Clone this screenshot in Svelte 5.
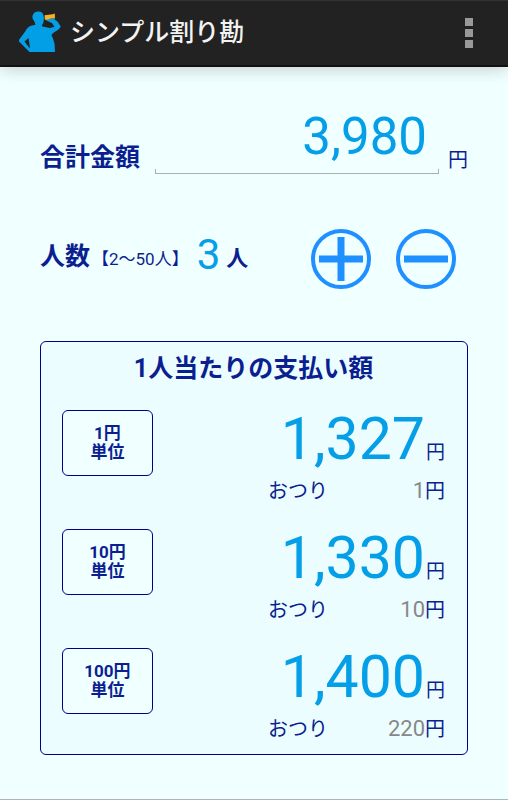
<script>
  let total = $state('3,980');
  let people = $state(3);

  const units = [1, 10, 100];
  const amount = $derived(Number(total.replace(/[^0-9]/g, '')) || 0);
  const rows = $derived(
    units.map((unit) => {
      const each = Math.ceil(amount / people / unit) * unit;
      return { unit, each, change: each * people - amount };
    })
  );

  function formatTotal() {
    total = amount.toLocaleString('en-US');
  }
</script>

<div class="screen">
  <header>
    <svg class="logo" viewBox="0 0 44 44" aria-hidden="true">
      <path
        fill="#029ee6"
        d="M19 0.5C22 0.3 24.3 2 24.5 4.5L25 7.5L24.5 11Q24.3 13 22.8 14L23.3 15.4L31 17L35.5 15.7L33.2 12.3L27.5 9.5Q25.4 8.6 25.8 7L29 8L34.5 7.2Q36.5 9.5 38.5 10.5L41.6 15.2Q41.6 16.6 39.5 18.5L34.2 22L32.4 24Q34.5 28 35.6 33L36 41H10.5L0 30.5Q-0.4 29.4 0.6 28L6.2 20.5Q8.6 15.8 12 14.8L16.5 13.8L15.2 10Q12.8 8 13.6 4.5Q15 0.7 19 0.5ZM9.6 27L5.4 30.4L11 37.5Z"
      />
      <path fill="#fbb01f" d="M25.6 4.3L33.5 3.2L35.8 2.5L36 7.4L33.5 7.2L27 8.8L25.8 8.2Z" />
    </svg>
    <h1>シンプル割り勘</h1>
    <button class="menu" aria-label="メニュー"><i></i><i></i><i></i></button>
  </header>

  <main>
    <div class="total">
      <label for="total">合計金額</label>
      <input id="total" type="text" inputmode="numeric" bind:value={total} onchange={formatTotal} />
      <span class="yen">円</span>
    </div>

    <div class="people">
      <h2>人数</h2>
      <span class="range">【2～50人】</span>
      <output class="count">{people}</output>
      <span class="person">人</span>
      <div class="steps">
        <button aria-label="増やす" onclick={() => (people = Math.min(50, people + 1))}>
          <svg viewBox="0 0 60 60">
            <circle cx="30" cy="30" r="28" />
            <path d="M8 30H52M30 8V52" />
          </svg>
        </button>
        <button aria-label="減らす" onclick={() => (people = Math.max(2, people - 1))}>
          <svg viewBox="0 0 60 60">
            <circle cx="30" cy="30" r="28" />
            <path d="M8 30H52" />
          </svg>
        </button>
      </div>
    </div>

    <section>
      <h2>1人当たりの支払い額</h2>
      {#each rows as row (row.unit)}
        <div class="row">
          <button class="unit">{row.unit}円<br />単位</button>
          <div class="result">
            <p class="each">
              <span class="big">{row.each.toLocaleString('en-US')}</span><span class="yen">円</span>
            </p>
            <p class="change">
              <span>おつり</span>
              <span><span class="num">{row.change.toLocaleString('en-US')}</span>円</span>
            </p>
          </div>
        </div>
      {/each}
    </section>
  </main>
</div>

<style>
  :global(body) {
    margin: 0;
  }

  .screen {
    box-sizing: border-box;
    min-height: 100vh;
    display: flex;
    flex-direction: column;
    background: #f0ffff;
    border-bottom: 1px solid #b0b4b6;
    color: #0c1f90;
    font-family: Roboto, 'Noto Sans CJK JP', sans-serif;
  }

  h1,
  h2,
  p {
    margin: 0;
  }

  button {
    padding: 0;
    border: 0;
    background: none;
    color: inherit;
    font-family: inherit;
    cursor: pointer;
  }

  header {
    box-sizing: border-box;
    height: 67px;
    display: flex;
    align-items: center;
    padding: 0 32px 0 19px;
    background: #222;
    border-top: 1px solid #333;
    border-bottom: 2px solid #151111;
    box-shadow: 0 2px 16px rgba(0, 0, 0, 0.2);
  }

  .logo {
    width: 44px;
    height: 44px;
    margin-right: 7px;
  }

  h1 {
    flex: 1;
    color: #f3f3f3;
    font-size: 25px;
    line-height: 36px;
    font-weight: 500;
  }

  .menu {
    display: flex;
    flex-direction: column;
    gap: 3px;
    padding: 2px 3px;
  }

  .menu i {
    width: 8px;
    height: 8px;
    background: #999;
  }

  main {
    padding: 39px 40px 44px;
  }

  .total {
    display: flex;
    align-items: flex-end;
  }

  .total label {
    margin-right: 15px;
    font-size: 25px;
    line-height: 32px;
    font-weight: 700;
  }

  .total input {
    box-sizing: border-box;
    flex: 1;
    min-width: 0;
    height: 68px;
    padding: 0 12px 8px;
    border: 0;
    outline: 0;
    border-radius: 0;
    background:
      linear-gradient(#a9b0b2, #a9b0b2) left bottom / 100% 1px no-repeat,
      linear-gradient(#a9b0b2, #a9b0b2) left bottom / 1px 5px no-repeat,
      linear-gradient(#a9b0b2, #a9b0b2) right bottom / 1px 5px no-repeat;
    color: #059fe8;
    font-family: inherit;
    font-size: 51px;
    text-align: right;
  }

  .yen {
    font-size: 20px;
    line-height: 28px;
  }

  .total .yen {
    margin-left: 9px;
  }

  .people {
    display: flex;
    align-items: center;
    margin-top: 55px;
  }

  .people h2,
  section h2 {
    font-size: 25px;
    line-height: 36px;
    font-weight: 700;
  }

  .people h2 {
    padding-bottom: 4px;
  }

  .range {
    margin-left: 2px;
    font-size: 17px;
    line-height: 28px;
  }

  .count {
    margin-left: 8px;
    padding-bottom: 8px;
    color: #059fe8;
    font-size: 42px;
    line-height: 48px;
  }

  .person {
    margin-left: 6px;
    font-size: 22px;
    line-height: 28px;
    font-weight: 700;
  }

  .steps {
    display: flex;
    gap: 25px;
    margin-left: auto;
    padding-right: 12px;
  }

  .steps button,
  .steps svg {
    display: block;
    width: 60px;
    height: 60px;
  }

  .steps svg {
    fill: none;
    stroke: #1e90ff;
  }

  .steps circle {
    stroke-width: 4;
  }

  .steps path {
    stroke-width: 7;
  }

  section {
    margin-top: 52px;
    padding: 9px 22px 10px 21px;
    border: 1px solid #00008b;
    border-radius: 6px;
    background: #ebfdff;
  }

  section h2 {
    text-align: center;
  }

  .row {
    display: flex;
    justify-content: space-between;
    margin-top: 14px;
  }

  .unit {
    box-sizing: border-box;
    width: 91px;
    height: 66px;
    margin-top: 9px;
    border: 1px solid #00008b;
    border-radius: 6px;
    background: #f0ffff;
    font-size: 17px;
    line-height: 19px;
    font-weight: 700;
  }

  .result {
    width: 177px;
  }

  .each {
    display: flex;
    justify-content: flex-end;
    align-items: baseline;
  }

  .big {
    color: #059fe8;
    font-size: 59px;
    line-height: 75px;
  }

  .each .yen {
    margin-left: 1px;
    font-size: 19px;
  }

  .change {
    display: flex;
    justify-content: space-between;
    align-items: baseline;
    font-size: 20px;
    line-height: 30px;
  }

  .num {
    color: #888;
    font-size: 22px;
  }
</style>
